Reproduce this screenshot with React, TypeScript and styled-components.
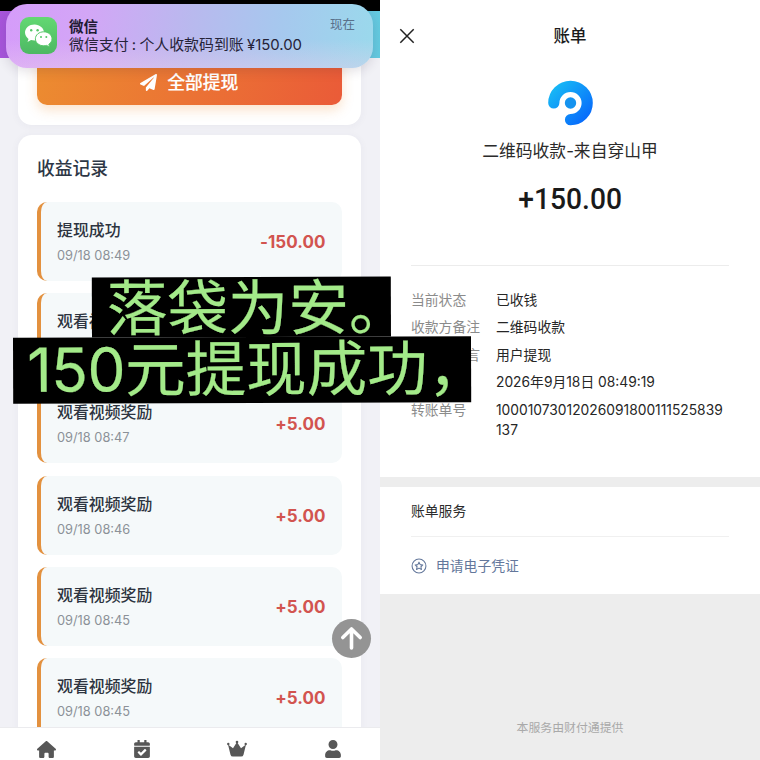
import React from "react";
import styled, { createGlobalStyle } from "styled-components";
import { FaUser, FaPaperPlane, FaCalendarCheck } from "react-icons/fa";
import { FaHouse } from "react-icons/fa6";

const Global = createGlobalStyle`
  * { box-sizing: border-box; }
  body {
    margin: 0;
    font-family: Inter, "Noto Sans CJK SC", sans-serif;
    overflow: hidden;
  }
`;

const Screen = styled.div`
  position: relative;
  width: 760px;
  height: 760px;
  display: grid;
  grid-template-columns: 380px 380px;
  overflow: hidden;
`;

const Phone = styled.section`
  position: relative;
  height: 760px;
  display: flex;
  flex-direction: column;
  overflow: hidden;
  background: #f1f1f6;
`;

const StatusBar = styled.div`
  flex: none;
  height: 11px;
  background: #000;
`;

const Header = styled.div`
  flex: none;
  height: 47px;
  background: linear-gradient(90deg, #a855dc, #8a8ae6 50%, #63cbe0);
`;

const Feed = styled.div`
  flex: 1;
  min-height: 0;
  overflow: hidden;
  padding: 0 19px 0 17.5px;
  display: flex;
  flex-direction: column;
  gap: 10px;
`;

const WithdrawCard = styled.div`
  flex: none;
  height: 67px;
  padding: 0 19.5px;
  background: #fff;
  border-radius: 0 0 14px 14px;
  box-shadow: 0 1px 8px rgba(60, 50, 100, 0.05);
`;

const WithdrawButton = styled.button`
  display: flex;
  align-items: center;
  justify-content: center;
  gap: 10px;
  width: 304.5px;
  height: 47px;
  padding: 2px 0 0;
  border: 0;
  border-radius: 0 0 10px 10px;
  color: #fff;
  font: 500 17.8px/24px Inter, "Noto Sans CJK SC", sans-serif;
  -webkit-text-stroke: 0.2px #fff;
  background: linear-gradient(105deg, #ec8c30, #ea5b38);
  box-shadow: 0 5px 12px rgba(238, 145, 50, 0.25);
`;

const RecordsCard = styled.div`
  flex: none;
  height: 640px;
  padding: 0 19.5px;
  background: #fff;
  border-radius: 14px;
  box-shadow: 0 1px 8px rgba(60, 50, 100, 0.05);
`;

const RecordsTitle = styled.h2`
  margin: 0;
  height: 67px;
  font-size: 17.8px;
  font-weight: 500;
  line-height: 67px;
  color: #2d3745;
`;

const RecordList = styled.div`
  display: grid;
  grid-auto-rows: 79px;
  row-gap: 12.2px;
`;

const Record = styled.article`
  width: 304.5px;
  display: flex;
  justify-content: space-between;
  align-items: center;
  padding: 1px 16px 0 16px;
  border-left: 4px solid #e3913f;
  border-radius: 10px;
  background: #f5f9fa;
`;

const RecordName = styled.div`
  font-size: 15.9px;
  font-weight: 500;
  line-height: 25px;
  color: #2d3440;
`;

const RecordTime = styled.div`
  height: 20px;
  margin-top: 3px;
  font-size: 12.8px;
  line-height: 20px;
  color: #8c9198;
`;

const Amount = styled.div`
  font-size: 17px;
  letter-spacing: 0.05px;
  font-weight: 700;
  color: #d2544f;
`;

const TabBar = styled.nav`
  flex: none;
  height: 33px;
  display: flex;
  justify-content: space-between;
  padding: 12px 37px 0 36px;
  border-top: 1px solid #ebebee;
  background: #fff;
  color: #575757;
  svg { display: block; }
`;

const Tab = styled.div`
  width: 20px;
  display: flex;
  justify-content: center;
`;

const TopButton = styled.div`
  position: absolute;
  left: 332px;
  top: 619px;
  width: 39px;
  height: 39px;
  border-radius: 50%;
  background: #949494;
  svg { display: block; }
`;

const Banner = styled.div`
  position: absolute;
  left: 6px;
  top: 4px;
  width: 367px;
  height: 64px;
  display: flex;
  padding: 13px 18px 0 14px;
  border-radius: 21px;
  background:
    linear-gradient(180deg, rgba(255, 255, 255, 0) 55%, rgba(236, 208, 235, 0.4)),
    linear-gradient(97deg, #d59cfa 0%, #d3a6f6 22%, #b9b9ee 50%, #a6c8ee 74%, #9ad9ec 100%);
  box-shadow: 0 3px 12px rgba(40, 30, 60, 0.14);
`;

const AppIcon = styled.div`
  flex: none;
  width: 37px;
  height: 37px;
  border-radius: 9px;
  background: linear-gradient(#63d873, #4db863);
  svg { display: block; }
`;

const BannerBody = styled.div`
  flex: 1;
  margin: 0 0 0 12px;
  white-space: nowrap;
`;

const BannerTitle = styled.div`
  font-size: 14.5px;
  font-weight: 700;
  line-height: 19px;
  color: #211b33;
`;

const BannerText = styled.div`
  font-size: 14.9px;
  line-height: 18px;
  word-spacing: -0.9px;
  color: #262338;
`;

const BannerTime = styled.div`
  margin-top: -1px;
  font-size: 12.5px;
  line-height: 18px;
  color: #59708a;
`;

const Bill = styled.section`
  height: 760px;
  display: flex;
  flex-direction: column;
  background: #ededed;
  color: #222;
`;

const BillMain = styled.div`
  flex: none;
  height: 477px;
  background: #fff;
`;

const BillBar = styled.div`
  display: grid;
  grid-template-columns: 54px 1fr 54px;
  align-items: center;
  height: 72px;
  svg { display: block; margin-left: 19px; }
`;

const BillTitle = styled.div`
  text-align: center;
  font-size: 16.5px;
  line-height: 24px;
  font-weight: 500;
  color: #1b1b1b;
`;

const Payee = styled.div`
  display: flex;
  flex-direction: column;
  align-items: center;
  height: 194px;
  margin: 0 31px;
  padding-top: 8px;
  border-bottom: 1px solid #ececec;
`;

const PayeeName = styled.div`
  margin-top: 12px;
  font-size: 16.8px;
  line-height: 26px;
  color: #2b2b2b;
`;

const Total = styled.div`
  margin-top: 15px;
  font-family: Roboto, sans-serif;
  font-size: 30px;
  font-weight: 500;
  line-height: 40px;
  transform: scaleX(0.94);
  color: #1a1a1a;
`;

const Details = styled.dl`
  display: grid;
  grid-template-columns: 85px 1fr;
  row-gap: 7.4px;
  margin: 24px 30px 0 31px;
  font-size: 13.8px;
  line-height: 20px;
`;

const Label = styled.dt`
  color: #8b8b8b;
`;

const Value = styled.dd`
  margin: 0;
  color: #262626;
`;

const Services = styled.div`
  flex: none;
  height: 107px;
  margin-top: 10px;
  padding: 0 31px;
  background: #fff;
`;

const ServicesTitle = styled.div`
  height: 50px;
  border-bottom: 1px solid #f0f0f0;
  font-size: 13.8px;
  line-height: 48px;
  color: #2b2b2b;
`;

const ServiceLink = styled.div`
  display: flex;
  align-items: center;
  gap: 9px;
  height: 57px;
  font-size: 13.8px;
  line-height: 20px;
  color: #63779b;
`;

const Provider = styled.div`
  margin-top: auto;
  padding-bottom: 22px;
  text-align: center;
  font-size: 11.9px;
  line-height: 20px;
  color: #a9a9a9;
`;

const Caption = styled.div`
  position: absolute;
  left: 13px;
  top: 276.5px;
  width: 458px;
  transform: rotate(-0.2deg);
  color: #a3ea89;
  -webkit-text-stroke: 0.2px #a3ea89;
  font-size: 60.5px;
  white-space: nowrap;
`;

const CaptionTop = styled.div`
  width: 299px;
  height: 60px;
  margin-left: 79px;
  padding-left: 15px;
  background: #000;
  line-height: 63px;
`;

const CaptionBottom = styled.div`
  display: flex;
  width: 458px;
  height: 66px;
  margin-top: -0.5px;
  padding-left: 14px;
  background: #000;
  line-height: 65px;
`;

const CaptionNumber = styled.span`
  width: 99px;
  letter-spacing: -0.5px;
`;

const records = [
  { name: "提现成功", time: "09/18 08:49", amount: "-150.00" },
  { name: "观看视频奖励", time: "", amount: "" },
  { name: "观看视频奖励", time: "09/18 08:47", amount: "+5.00" },
  { name: "观看视频奖励", time: "09/18 08:46", amount: "+5.00" },
  { name: "观看视频奖励", time: "09/18 08:45", amount: "+5.00" },
  { name: "观看视频奖励", time: "09/18 08:45", amount: "+5.00" },
];

const WeChatIcon = () => (
  <svg width="37" height="37" viewBox="0 0 37 37">
    <path d="M14.500 7.500C9.200 7.500 5 11 5 15.600c0 2.600 1.400 4.800 3.500 6.300l-1 3 3.500-1.800c1.100.3 2.300.5 3.500.5 5.200 0 9.500-3.600 9.500-8s-4.300-8.100-9.500-8.100z" fill="#fff" />
    <path d="M23.700 14.800c-4.600 0-8.300 3.100-8.300 7s3.700 7 8.300 7c1 0 2-.2 2.900-.4l3 1.600-.8-2.700c2-1.300 3.200-3.200 3.200-5.500 0-3.900-3.700-7-8.300-7z" fill="#fff" stroke="#57c96a" strokeWidth="1" />
    <g fill="#55c768">
      <circle cx="11.200" cy="13.200" r="1.200" /><circle cx="17.600" cy="13.200" r="1.200" />
      <circle cx="21" cy="20" r="1" /><circle cx="26.300" cy="20" r="1" />
    </g>
  </svg>
);

const BrandMark = () => (
  <svg width="46" height="46" viewBox="0 0 46 46">
    <defs>
      <linearGradient id="mark" x1="4" y1="6" x2="38" y2="40" gradientUnits="userSpaceOnUse">
        <stop offset="0" stopColor="#18bdf5" />
        <stop offset="1" stopColor="#086cfb" />
      </linearGradient>
    </defs>
    <path d="M6.800 23A16.700 16.700 0 1 1 23.500 39.700" fill="none" stroke="url(#mark)" strokeWidth="11.200" strokeLinecap="round" />
    <circle cx="23.500" cy="23" r="5.700" fill="#1593ef" />
  </svg>
);

export default function App() {
  return (
    <>
      <Global />
      <Screen>
        <Phone>
          <StatusBar />
          <Header />
          <Feed>
            <WithdrawCard>
              <WithdrawButton><FaPaperPlane size={17} />全部提现</WithdrawButton>
            </WithdrawCard>
            <RecordsCard>
              <RecordsTitle>收益记录</RecordsTitle>
              <RecordList>
                {records.map((r, i) => (
                  <Record key={i}>
                    <div>
                      <RecordName>{r.name}</RecordName>
                      <RecordTime>{r.time}</RecordTime>
                    </div>
                    <Amount>{r.amount}</Amount>
                  </Record>
                ))}
              </RecordList>
            </RecordsCard>
          </Feed>
          <TabBar>
            <Tab><FaHouse size={19} /></Tab>
            <Tab><FaCalendarCheck size={18} /></Tab>
            <Tab>
              <svg width="20" height="18" viewBox="0 0 20 18" fill="currentColor">
                <circle cx="10" cy="2" r="1.300" /><circle cx="1.300" cy="4" r="1.200" /><circle cx="18.700" cy="4" r="1.200" />
                <path d="M1 4.500 6 8.300 10 2l4 6.300 5-3.800-2.500 10.200a2.500 2.500 0 0 1-2.400 1.900H5.900a2.500 2.500 0 0 1-2.400-1.900z" />
              </svg>
            </Tab>
            <Tab><FaUser size={18} /></Tab>
          </TabBar>
          <TopButton>
            <svg width="39" height="39" viewBox="0 0 39 39" fill="none" stroke="#fff" strokeWidth="3.600" strokeLinecap="round" strokeLinejoin="round">
              <path d="M19.500 29V10.500M10.800 18.500l8.700-8.500 8.700 8.500" />
            </svg>
          </TopButton>
          <Banner>
            <AppIcon><WeChatIcon /></AppIcon>
            <BannerBody>
              <BannerTitle>微信</BannerTitle>
              <BannerText>微信支付 : 个人收款码到账 ¥150.00</BannerText>
            </BannerBody>
            <BannerTime>现在</BannerTime>
          </Banner>
        </Phone>

        <Bill>
          <BillMain>
            <BillBar>
              <svg width="16" height="16" viewBox="0 0 16 16" fill="none" stroke="#222" strokeWidth="1.500">
                <path d="M1.300 1.300l13.400 13.400M14.700 1.300l-13.400 13.400" />
              </svg>
              <BillTitle>账单</BillTitle>
            </BillBar>
            <Payee>
              <BrandMark />
              <PayeeName>二维码收款-来自穿山甲</PayeeName>
              <Total>+150.00</Total>
            </Payee>
            <Details>
              <Label>当前状态</Label><Value>已收钱</Value>
              <Label>收款方备注</Label><Value>二维码收款</Value>
              <Label>付款方留言</Label><Value>用户提现</Value>
              <Label /><Value>2026年9月18日 08:49:19</Value>
              <Label>转账单号</Label><Value>10001073012026091800111525839<br />137</Value>
            </Details>
          </BillMain>
          <Services>
            <ServicesTitle>账单服务</ServicesTitle>
            <ServiceLink>
              <svg width="16" height="16" viewBox="0 0 15 15" fill="none" stroke="currentColor" strokeWidth="1">
                <circle cx="7.500" cy="7.500" r="6.500" />
                <path strokeLinejoin="round" d="M7.500 3.900l1.100 2.300 2.500.3-1.800 1.700.5 2.500-2.300-1.200-2.300 1.200.5-2.500-1.800-1.700 2.500-.3z" />
              </svg>
              申请电子凭证
            </ServiceLink>
          </Services>
          <Provider>本服务由财付通提供</Provider>
        </Bill>

        <Caption>
          <CaptionTop>落袋为安。</CaptionTop>
          <CaptionBottom><CaptionNumber>150</CaptionNumber>元提现成功，</CaptionBottom>
        </Caption>
      </Screen>
    </>
  );
}
